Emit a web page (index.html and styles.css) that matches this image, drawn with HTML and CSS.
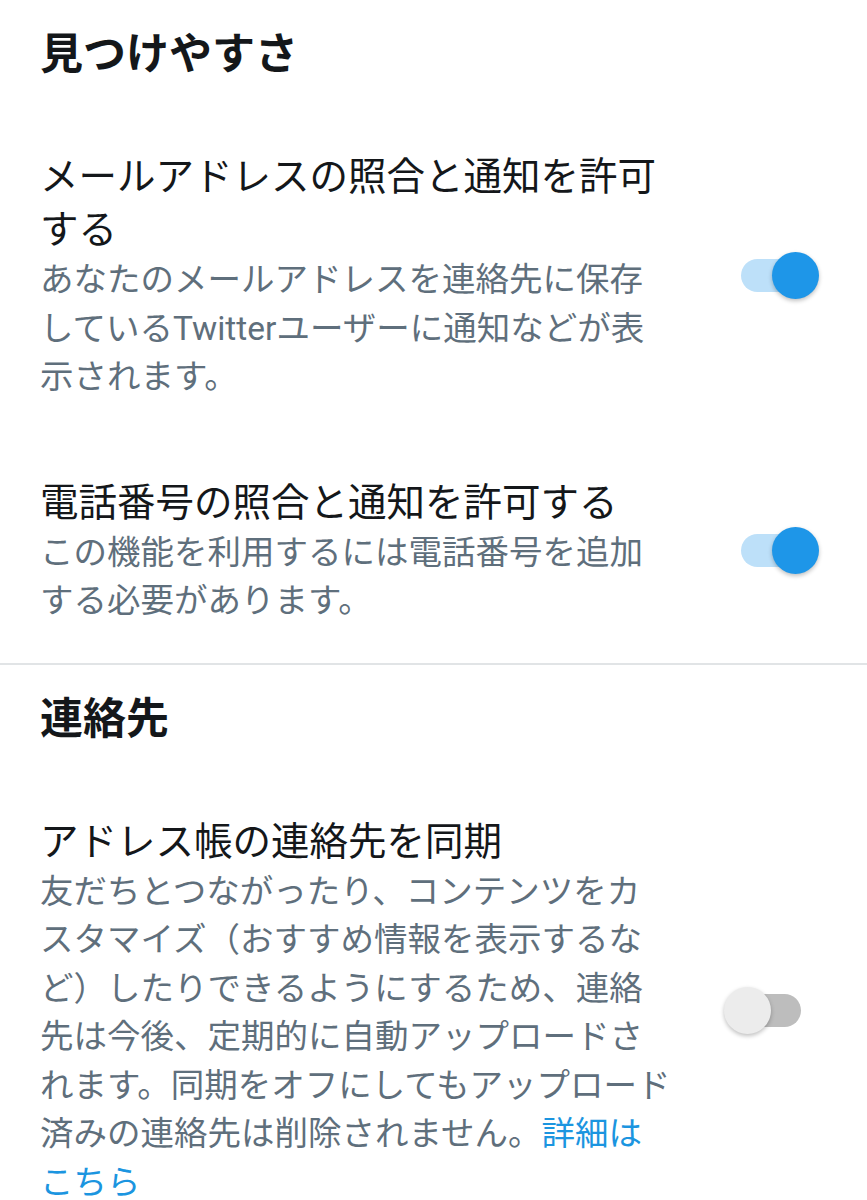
FILE: index.html
```html
<!DOCTYPE html>
<html lang="ja">
<head>
  <meta charset="UTF-8">
  <title>見つけやすさと連絡先</title>
  <link rel="stylesheet" href="styles.css">
</head>
<body>

<div class="section">
  <h2 class="section-title">見つけやすさ</h2>

  <div class="setting">
    <div class="setting-text">
      <div class="setting-label">メールアドレスの照合と通知を許可する</div>
      <div class="setting-desc">あなたのメールアドレスを連絡先に保存<br>しているTwitterユーザーに通知などが表<br>示されます。</div>
    </div>
    <div class="switch on"><span class="thumb"></span></div>
  </div>

  <div class="setting">
    <div class="setting-text">
      <div class="setting-label">電話番号の照合と通知を許可する</div>
      <div class="setting-desc">この機能を利用するには電話番号を追加<br>する必要があります。</div>
    </div>
    <div class="switch on"><span class="thumb"></span></div>
  </div>
</div>

<div class="section">
  <h2 class="section-title">連絡先</h2>

  <div class="setting">
    <div class="setting-text">
      <div class="setting-label">アドレス帳の連絡先を同期</div>
      <div class="setting-desc">友だちとつながったり、コンテンツをカ<br>スタマイズ（おすすめ情報を表示するな<br>ど）したりできるようにするため、連絡<br>先は今後、定期的に自動アップロードさ<br>れます。同期をオフにしてもアップロード<br>済みの連絡先は削除されません。<a href="#" class="more">詳細は<br>こちら</a></div>
    </div>
    <div class="switch"><span class="thumb"></span></div>
  </div>
</div>

</body>
</html>
```

FILE: styles.css
```css
body {
  margin: 0;
  background: #fff;
  font-family: Roboto, "Noto Sans CJK JP", sans-serif;
  color: #14171a;
}
.section + .section {
  border-top: 2px solid #e1e4e6;
}
.section-title {
  margin: 0;
  padding: 28px 40px 33px;
  font-size: 43px;
  line-height: 52px;
  font-weight: 700;
}
.setting {
  display: flex;
  align-items: center;
  justify-content: space-between;
  padding: 37px 40px;
}
.setting-text {
  width: 650px;
}
.setting-label {
  font-size: 38.5px;
  line-height: 53px;
}
.setting-desc {
  font-size: 33.5px;
  line-height: 48.5px;
  color: #5f6f7c;
}
.more {
  color: #1b95e0;
  text-decoration: none;
}
.switch {
  position: relative;
  width: 60px;
  height: 33px;
  margin-right: 26px;
  border-radius: 17px;
  background: #bdbdbd;
}
.switch .thumb {
  position: absolute;
  top: -7px;
  left: -17px;
  width: 47px;
  height: 47px;
  border-radius: 50%;
  background: #ececec;
  box-shadow: 0 2px 4px rgba(0,0,0,0.25);
}
.switch.on {
  background: #bde0f9;
}
.switch.on .thumb {
  left: 31px;
  background: #1e96e8;
}
```
